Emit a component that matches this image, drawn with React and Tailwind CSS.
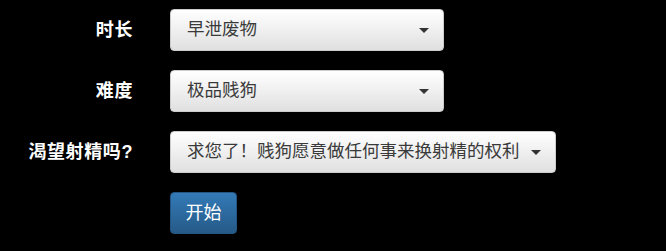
import React from "react";

const font = { fontFamily: '"Liberation Sans", "Noto Sans CJK SC", sans-serif' };

function Caret() {
  return (
    <span className="inline-block w-0 h-0 border-t-[5px] border-t-[#333] border-x-[5px] border-x-transparent" />
  );
}

function Select({ value, wide }) {
  return (
    <button
      className={`flex h-[42px] items-center rounded-[4px] border border-[#ccc] bg-gradient-to-b from-white to-[#e0e0e0] pl-[16px] pr-[14px] text-[17.5px] text-[#3a3a3a] shadow-[inset_0_1px_0_rgba(255,255,255,0.15),0_1px_1px_rgba(0,0,0,0.075)] ${
        wide ? "gap-[11px]" : "w-[274px] justify-between"
      }`}
    >
      <span className="leading-none">{value}</span>
      <Caret />
    </button>
  );
}

export default function App() {
  const rows = [
    { label: "时长", value: "早泄废物" },
    { label: "难度", value: "极品贱狗" },
    { label: "渴望射精吗?", value: "求您了！贱狗愿意做任何事来换射精的权利", wide: true },
  ];

  return (
    <div className="w-[666px] h-[251px] bg-black pt-[9px]" style={font}>
      <div className="flex flex-col gap-[19px]">
        {rows.map((row) => (
          <div key={row.label} className="flex items-center">
            <div className="w-[134px] pr-[1px] text-right text-[18px] tracking-[0.6px] font-bold text-white leading-none">
              {row.label}
            </div>
            <div className="ml-[36px]">
              <Select value={row.value} wide={row.wide} />
            </div>
          </div>
        ))}
        <div className="flex">
          <div className="w-[134px]" />
          <button className="ml-[36px] h-[42px] w-[67px] rounded-[4px] border border-[#245580] bg-gradient-to-b from-[#337ab7] to-[#265a88] text-[18px] text-white leading-none">
            开始
          </button>
        </div>
      </div>
    </div>
  );
}
